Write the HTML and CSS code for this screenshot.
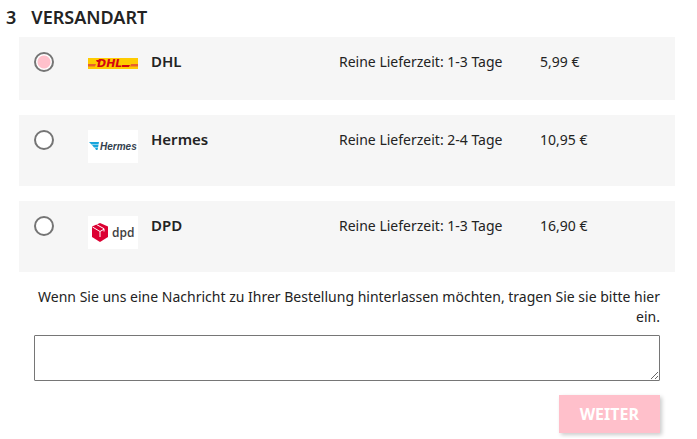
FILE: index.html
```
<!DOCTYPE html>
<html lang="de">
<head>
<meta charset="utf-8">
<meta name="viewport" content="width=device-width, initial-scale=1">
<title>Versandart</title>
<link rel="stylesheet" href="styles.css">
</head>
<body>
<form class="step">
  <h1 class="step-title"><span class="step-number">3</span>Versandart</h1>
  <div class="options">
    <label class="option">
      <input class="option-radio" type="radio" name="carrier" value="dhl" checked>
      <span class="carrier">
        <span class="logo">
          <svg width="50" height="11" viewBox="0 0 50 11" aria-hidden="true">
            <path fill="#fecb00" d="M0 0h50v11H0z"/>
            <path fill="#e8602c" d="M0 6h8l-1 2.500H0zM43 6h7v2.500h-8z"/>
            <text class="logo-dhl" x="9" y="9">DHL</text>
            <path fill="#d40511" d="M8 2h5l-1 2H9zM34 7h8l-1 2h-7z"/>
          </svg>
        </span>
        <span class="carrier-name">DHL</span>
      </span>
      <span>Reine Lieferzeit: 1-3 Tage</span>
      <span>5,99 €</span>
    </label>
    <label class="option">
      <input class="option-radio" type="radio" name="carrier" value="hermes">
      <span class="carrier">
        <span class="logo">
          <svg width="50" height="33" viewBox="0 0 50 33" aria-hidden="true">
            <path fill="#fff" d="M0 0h50v33H0z"/>
            <path fill="#18a6dc" d="M1 12h10l-.5 2.500H3.500zM4 15h6.500l-.5 2.500H6zM7 18h3l-.5 2H8z"/>
            <text class="logo-hermes" x="12" y="20">Hermes</text>
          </svg>
        </span>
        <span class="carrier-name">Hermes</span>
      </span>
      <span>Reine Lieferzeit: 2-4 Tage</span>
      <span>10,95 €</span>
    </label>
    <label class="option">
      <input class="option-radio" type="radio" name="carrier" value="dpd">
      <span class="carrier">
        <span class="logo">
          <svg width="50" height="33" viewBox="0 0 50 33" aria-hidden="true">
            <path fill="#fff" d="M0 0h50v33H0z"/>
            <path fill="#dc0032" d="M12 7l8 3.500v10.500l-8 5-8-5V10.500z"/>
            <path fill="none" stroke="#fff" d="M4.500 11l7.500 4.500V21M12 15.500l4-2.300M8.500 8.500l7.500 4.200v2.800"/>
            <text class="logo-dpd" x="24" y="21">dpd</text>
          </svg>
        </span>
        <span class="carrier-name">DPD</span>
      </span>
      <span>Reine Lieferzeit: 1-3 Tage</span>
      <span>16,90 €</span>
    </label>
  </div>
  <div class="message">
    <label class="message-label" for="message">Wenn Sie uns eine Nachricht zu Ihrer Bestellung hinterlassen möchten, tragen Sie sie bitte hier ein.</label>
    <textarea class="message-input" id="message" name="message"></textarea>
    <button class="next" type="submit">Weiter</button>
  </div>
</form>
</body>
</html>
```

FILE: styles.css
```
* {
  box-sizing: border-box;
}

body {
  margin: 0;
  background: #fff;
  color: #232323;
  font: 14px/20px "Noto Sans", sans-serif;
}

.step {
  padding: 5px 22px 5px 6px;
}

.step-title {
  display: flex;
  gap: 15px;
  margin: 0 0 7px;
  font-size: 18px;
  font-weight: 600;
  line-height: 25px;
  text-transform: uppercase;
}

.options {
  display: grid;
  gap: 15px;
  margin-left: 13px;
}

.option {
  display: grid;
  grid-template-columns: 54fr 251fr 201fr 120fr;
  align-items: start;
  min-height: 63px;
  padding: 15px;
  background: #f6f6f6;
  cursor: pointer;
}

.option-radio {
  appearance: none;
  width: 20px;
  height: 20px;
  margin: 0;
  border: 2px solid #757575;
  border-radius: 50%;
  background: #fff;
}

.option-radio:checked {
  background: radial-gradient(circle, #ffc0cb 6px, #fff 7px);
}

.carrier {
  display: flex;
  align-items: flex-start;
  gap: 13px;
}

.logo {
  display: flex;
  align-items: center;
  min-height: 23px;
  margin-bottom: 8px;
}

.logo-dhl {
  fill: #d40511;
  font: italic 700 11px "DejaVu Sans", sans-serif;
}

.logo-hermes {
  fill: #33414e;
  font: italic 700 10px "Liberation Sans", sans-serif;
}

.logo-dpd {
  fill: #414042;
  font: 600 12px "Open Sans", sans-serif;
}

.carrier-name {
  font-size: 15px;
  font-weight: 600;
  line-height: 18px;
}

.message {
  display: flex;
  flex-direction: column;
  margin: 15px 15px 0 28px;
}

.message-label {
  text-align: right;
}

.message-input {
  width: 100%;
  height: 46px;
  margin-top: 8px;
  border: 1px solid #767676;
  border-radius: 1px;
  font: inherit;
  resize: vertical;
}

.next {
  align-self: flex-end;
  margin-top: 14px;
  padding: 9px 21px;
  border: 0;
  background: #ffc0cb;
  box-shadow: 2px 2px 4px #ccc;
  color: #fff;
  font: 700 16px/20px "Noto Sans", sans-serif;
  text-transform: uppercase;
  cursor: pointer;
}
```
